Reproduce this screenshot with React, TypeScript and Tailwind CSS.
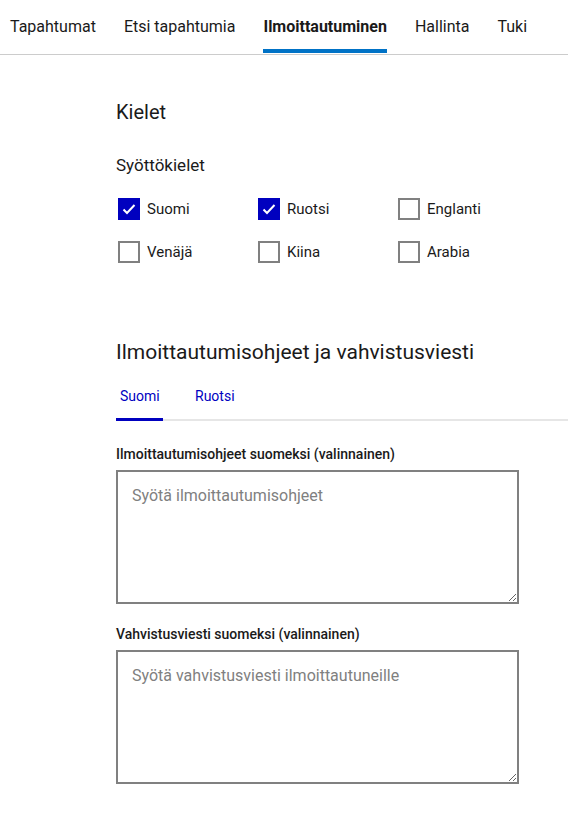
const navItems = ["Tapahtumat", "Etsi tapahtumia", "Ilmoittautuminen", "Hallinta", "Tuki"];

const languages = [
  { label: "Suomi", checked: true },
  { label: "Ruotsi", checked: true },
  { label: "Englanti", checked: false },
  { label: "Venäjä", checked: false },
  { label: "Kiina", checked: false },
  { label: "Arabia", checked: false },
];

function Checkbox({ label, checked }: { label: string; checked: boolean }) {
  return (
    <label className="flex items-center gap-[7px] h-[22px]">
      {checked ? (
        <span className="w-[22px] h-[22px] bg-[#0000bf] border-2 border-[#0000bf] flex items-center justify-center">
          <svg width="16" height="16" viewBox="0 0 16 16" fill="none">
            <path d="M2.5 8.5l3.5 3.5 7.5-8" stroke="white" strokeWidth="2" />
          </svg>
        </span>
      ) : (
        <span className="w-[22px] h-[22px] border-2 border-[#808080] bg-white" />
      )}
      <span className="text-[15px] text-[#1a1a1a]">{label}</span>
    </label>
  );
}

function Field({ label, placeholder }: { label: string; placeholder: string }) {
  return (
    <div className="flex flex-col">
      <span className="text-[14px] font-medium text-[#1a1a1a] leading-[20px] mb-[6px]">{label}</span>
      <textarea
        className="w-[403px] h-[134px] border-2 border-[#808080] px-[14px] pt-[12px] pb-[14px] text-[16px] placeholder:text-[#808080] outline-none"
        placeholder={placeholder}
      />
    </div>
  );
}

export default function App() {
  return (
    <div className="min-h-[819px] bg-white font-['Roboto',sans-serif] text-[#1a1a1a]">
      {/* NAV */}
      <nav className="flex h-[55px] border-b border-[#cccccc] pl-[10px]">
        {navItems.map((item) => (
          <div
            key={item}
            className={`relative flex items-center mr-[28px] text-[16px] ${
              item === "Ilmoittautuminen" ? "font-bold" : ""
            }`}
          >
            {item}
            {item === "Ilmoittautuminen" && (
              <span className="absolute left-0 right-0 bottom-[1px] h-[4px] bg-[#0072c6]" />
            )}
          </div>
        ))}
      </nav>

      {/* KIELET */}
      <section className="pl-[116px] pt-[44px]">
        <h2 className="text-[20px] leading-[26px]">Kielet</h2>
        <h3 className="text-[17px] mt-[28px] leading-[24px]">Syöttökielet</h3>
        <div className="grid grid-cols-[140px_140px_140px] gap-y-[21px] mt-[21px] pl-[2px]">
          {languages.map((l) => (
            <Checkbox key={l.label} {...l} />
          ))}
        </div>
      </section>

      {/* OHJEET */}
      <section className="pl-[116px] pt-[75px]">
        <h2 className="text-[21px] leading-[28px]">Ilmoittautumisohjeet ja vahvistusviesti</h2>
        <div className="flex border-b-2 border-[#e6e6e6] mt-[20px]">
          <div className="relative px-[4px] pb-[12px] text-[14px] text-[#0000bf] w-[47px]">
            Suomi
            <span className="absolute left-0 right-0 bottom-[-2px] h-[3px] bg-[#0000bf]" />
          </div>
          <div className="ml-[32px] pb-[12px] text-[14px] text-[#0000bf]">Ruotsi</div>
        </div>
        <div className="flex flex-col gap-[20px] mt-[23px]">
          <Field label="Ilmoittautumisohjeet suomeksi (valinnainen)" placeholder="Syötä ilmoittautumisohjeet" />
          <Field label="Vahvistusviesti suomeksi (valinnainen)" placeholder="Syötä vahvistusviesti ilmoittautuneille" />
        </div>
      </section>
    </div>
  );
}
